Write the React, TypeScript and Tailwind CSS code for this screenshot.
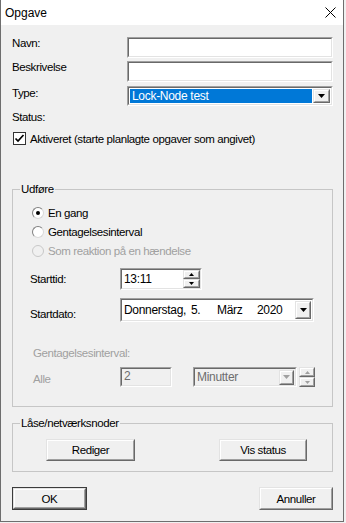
import React from 'react';

function Sunken({ className = '', inner = '', children }: { className?: string; inner?: string; children?: React.ReactNode }) {
  return (
    <div className={`border border-t-[#a0a0a0] border-l-[#a0a0a0] border-r-white border-b-white ${className}`}>
      <div className={`h-full border border-t-[#696969] border-l-[#696969] border-r-[#e3e3e3] border-b-[#e3e3e3] ${inner}`}>{children}</div>
    </div>
  );
}

function Raised({ className = '', children }: { className?: string; children?: React.ReactNode }) {
  return (
    <div className={`border border-t-[#e3e3e3] border-l-[#e3e3e3] border-r-[#696969] border-b-[#696969] bg-[#f0f0f0] ${className}`}>
      <div className="h-full border border-t-white border-l-white border-r-[#a0a0a0] border-b-[#a0a0a0] flex items-center justify-center">{children}</div>
    </div>
  );
}

function Arrow({ color = '#000', up = false, w = 7, h = 4 }: { color?: string; up?: boolean; w?: number; h?: number }) {
  return (
    <svg width={w} height={h} viewBox={`0 0 ${w} ${h}`}>
      <polygon points={up ? `0,${h} ${w},${h} ${w / 2},0` : `0,0 ${w},0 ${w / 2},${h}`} fill={color} />
    </svg>
  );
}

function Radio({ checked = false, disabled = false, label }: { checked?: boolean; disabled?: boolean; label: string }) {
  return (
    <div className="flex items-center h-[19px]">
      <div className={`w-[12px] h-[12px] rounded-full border ${disabled ? 'border-[#c8c8c8] bg-[#f0f0f0]' : 'border-t-[#808080] border-l-[#808080] border-r-[#d8d8d8] border-b-[#d8d8d8] bg-white'} flex items-center justify-center`}>
        {checked && <div className="w-[4px] h-[4px] rounded-full bg-black" />}
      </div>
      <span className={`ml-[4px] ${disabled ? 'text-[#a0a0a0]' : 'text-black'}`}>{label}</span>
    </div>
  );
}

export default function App() {
  return (
    <div className="w-[346px] h-[523px] bg-[#f0f0f0] font-['Liberation_Sans',Arial,sans-serif] text-[11.5px] leading-[14px] tracking-[-0.4px] text-black">
      <div className="w-[344px] h-[522px] border-l border-r border-b border-[#6e6e6e] flex flex-col">
        {/* title bar */}
        <div className="h-[25px] bg-white flex items-center justify-between pl-[4px] pr-[7px]">
          <span className="text-[12px] tracking-normal">Opgave</span>
          <svg width="11" height="11" viewBox="0 0 11 11">
            <path d="M0.5 0.5 L10.5 10.5 M10.5 0.5 L0.5 10.5" stroke="#000" strokeWidth="1" />
          </svg>
        </div>

        <div className="flex-1 pl-[11px] pt-[12px]">
          <div className="flex items-start h-[21px]">
            <span className="w-[115px] mt-[-1px]">Navn:</span>
            <Sunken className="w-[206px] h-[21px]" inner="bg-white" />
          </div>
          <div className="flex items-start h-[21px] mt-[3px]">
            <span className="w-[115px] mt-[-1px]">Beskrivelse</span>
            <Sunken className="w-[206px] h-[21px]" inner="bg-white" />
          </div>
          <div className="flex items-start h-[20px] mt-[4px]">
            <span className="w-[115px]">Type:</span>
            <Sunken className="w-[206px] h-[20px]" inner="bg-white flex p-[1px]">
              <div className="flex-1 bg-[#0078d7] text-white text-[12px] tracking-[-0.3px] leading-[14px] pl-[2px]">Lock-Node test</div>
              <Raised className="w-[17px] ml-[1px]">
                <Arrow />
              </Raised>
            </Sunken>
          </div>
          <div className="mt-[4px]">Status:</div>
          <div className="flex items-center h-[13px] mt-[8px] ml-[1px]">
            <div className="w-[13px] h-[13px] border border-[#333333] bg-white flex items-center justify-center">
              <svg width="11" height="11" viewBox="0 0 11 11">
                <path d="M1.5 5.5 L4 8 L9.5 2" stroke="#000" strokeWidth="1.7" fill="none" />
              </svg>
            </div>
            <span className="ml-[4px]">Aktiveret (starte planlagte opgaver som angivet)</span>
          </div>

          <fieldset className="w-[321px] mt-[37px] border border-[#c6c6c6] pt-[7px] pb-[19px]">
            <legend className="ml-[7px] px-[1px]">Udføre</legend>
            <div className="pl-[19px]">
              <Radio checked label="En gang" />
              <Radio label="Gentagelsesinterval" />
              <Radio disabled label="Som reaktion på en hændelse" />
            </div>
            <div className="flex items-center h-[22px] mt-[8px] pl-[17px]">
              <span className="w-[90px]">Starttid:</span>
              <Sunken className="w-[82px] h-[22px]" inner="bg-white flex items-center">
                <span className="flex-1 pl-[2px] text-[12px] tracking-[-0.3px]">13:11</span>
                <div className="flex flex-col w-[17px] h-full">
                  <Raised className="flex-1"><Arrow up w={5} h={3} /></Raised>
                  <Raised className="flex-1"><Arrow w={5} h={3} /></Raised>
                </div>
              </Sunken>
            </div>
            <div className="flex items-center h-[24px] mt-[8px] pl-[17px]">
              <span className="w-[90px] mt-[7px]">Startdato:</span>
              <Sunken className="w-[194px] h-[24px]" inner="bg-white flex items-center">
                <div className="flex-1 flex pl-[2px] text-[12px] tracking-[-0.3px]">
                  <span className="w-[67px]">Donnerstag,</span>
                  <span className="w-[26px]">5.</span>
                  <span className="w-[40px]">März</span>
                  <span>2020</span>
                </div>
                <Raised className="w-[16px] h-[18px] mr-[1px]">
                  <Arrow />
                </Raised>
              </Sunken>
            </div>
            <div className="mt-[24px] pl-[20px] text-[#a0a0a0]">Gentagelsesinterval:</div>
            <div className="flex items-center h-[20px] mt-[7px] pl-[20px]">
              <span className="w-[87px] mt-[4px] text-[#a0a0a0]">Alle</span>
              <Sunken className="w-[52px] h-[20px]" inner="bg-[#f0f0f0]">
                <span className="pl-[2px] text-[12px] text-[#6d6d6d]">2</span>
              </Sunken>
              <Sunken className="w-[104px] h-[20px] ml-[21px]" inner="bg-[#f0f0f0] flex items-center">
                <span className="flex-1 pl-[2px] text-[12px] tracking-[-0.3px] text-[#6d6d6d]">Minutter</span>
                <Raised className="w-[15px] h-[15px] mr-[1px]">
                  <Arrow color="#a0a0a0" />
                </Raised>
              </Sunken>
              <div className="flex flex-col w-[16px] h-[20px] ml-[2px]">
                <Raised className="flex-1"><Arrow up color="#a0a0a0" w={5} h={3} /></Raised>
                <Raised className="flex-1"><Arrow color="#a0a0a0" w={5} h={3} /></Raised>
              </div>
            </div>
          </fieldset>

          <fieldset className="w-[321px] mt-[9px] border border-[#c6c6c6] pt-[9px] pb-[10px]">
            <legend className="ml-[7px] px-[1px]">Låse/netværksnoder</legend>
            <div className="flex pl-[33px] gap-[84px]">
              <Raised className="w-[89px] h-[22px]">Rediger</Raised>
              <Raised className="w-[88px] h-[22px]">Vis status</Raised>
            </div>
          </fieldset>

          <div className="w-[321px] flex justify-between mt-[15px]">
            <div className="border border-[#3c3c3c]">
              <Raised className="w-[73px] h-[21px]">OK</Raised>
            </div>
            <Raised className="w-[74px] h-[23px]">Annuller</Raised>
          </div>
        </div>
      </div>
    </div>
  );
}
